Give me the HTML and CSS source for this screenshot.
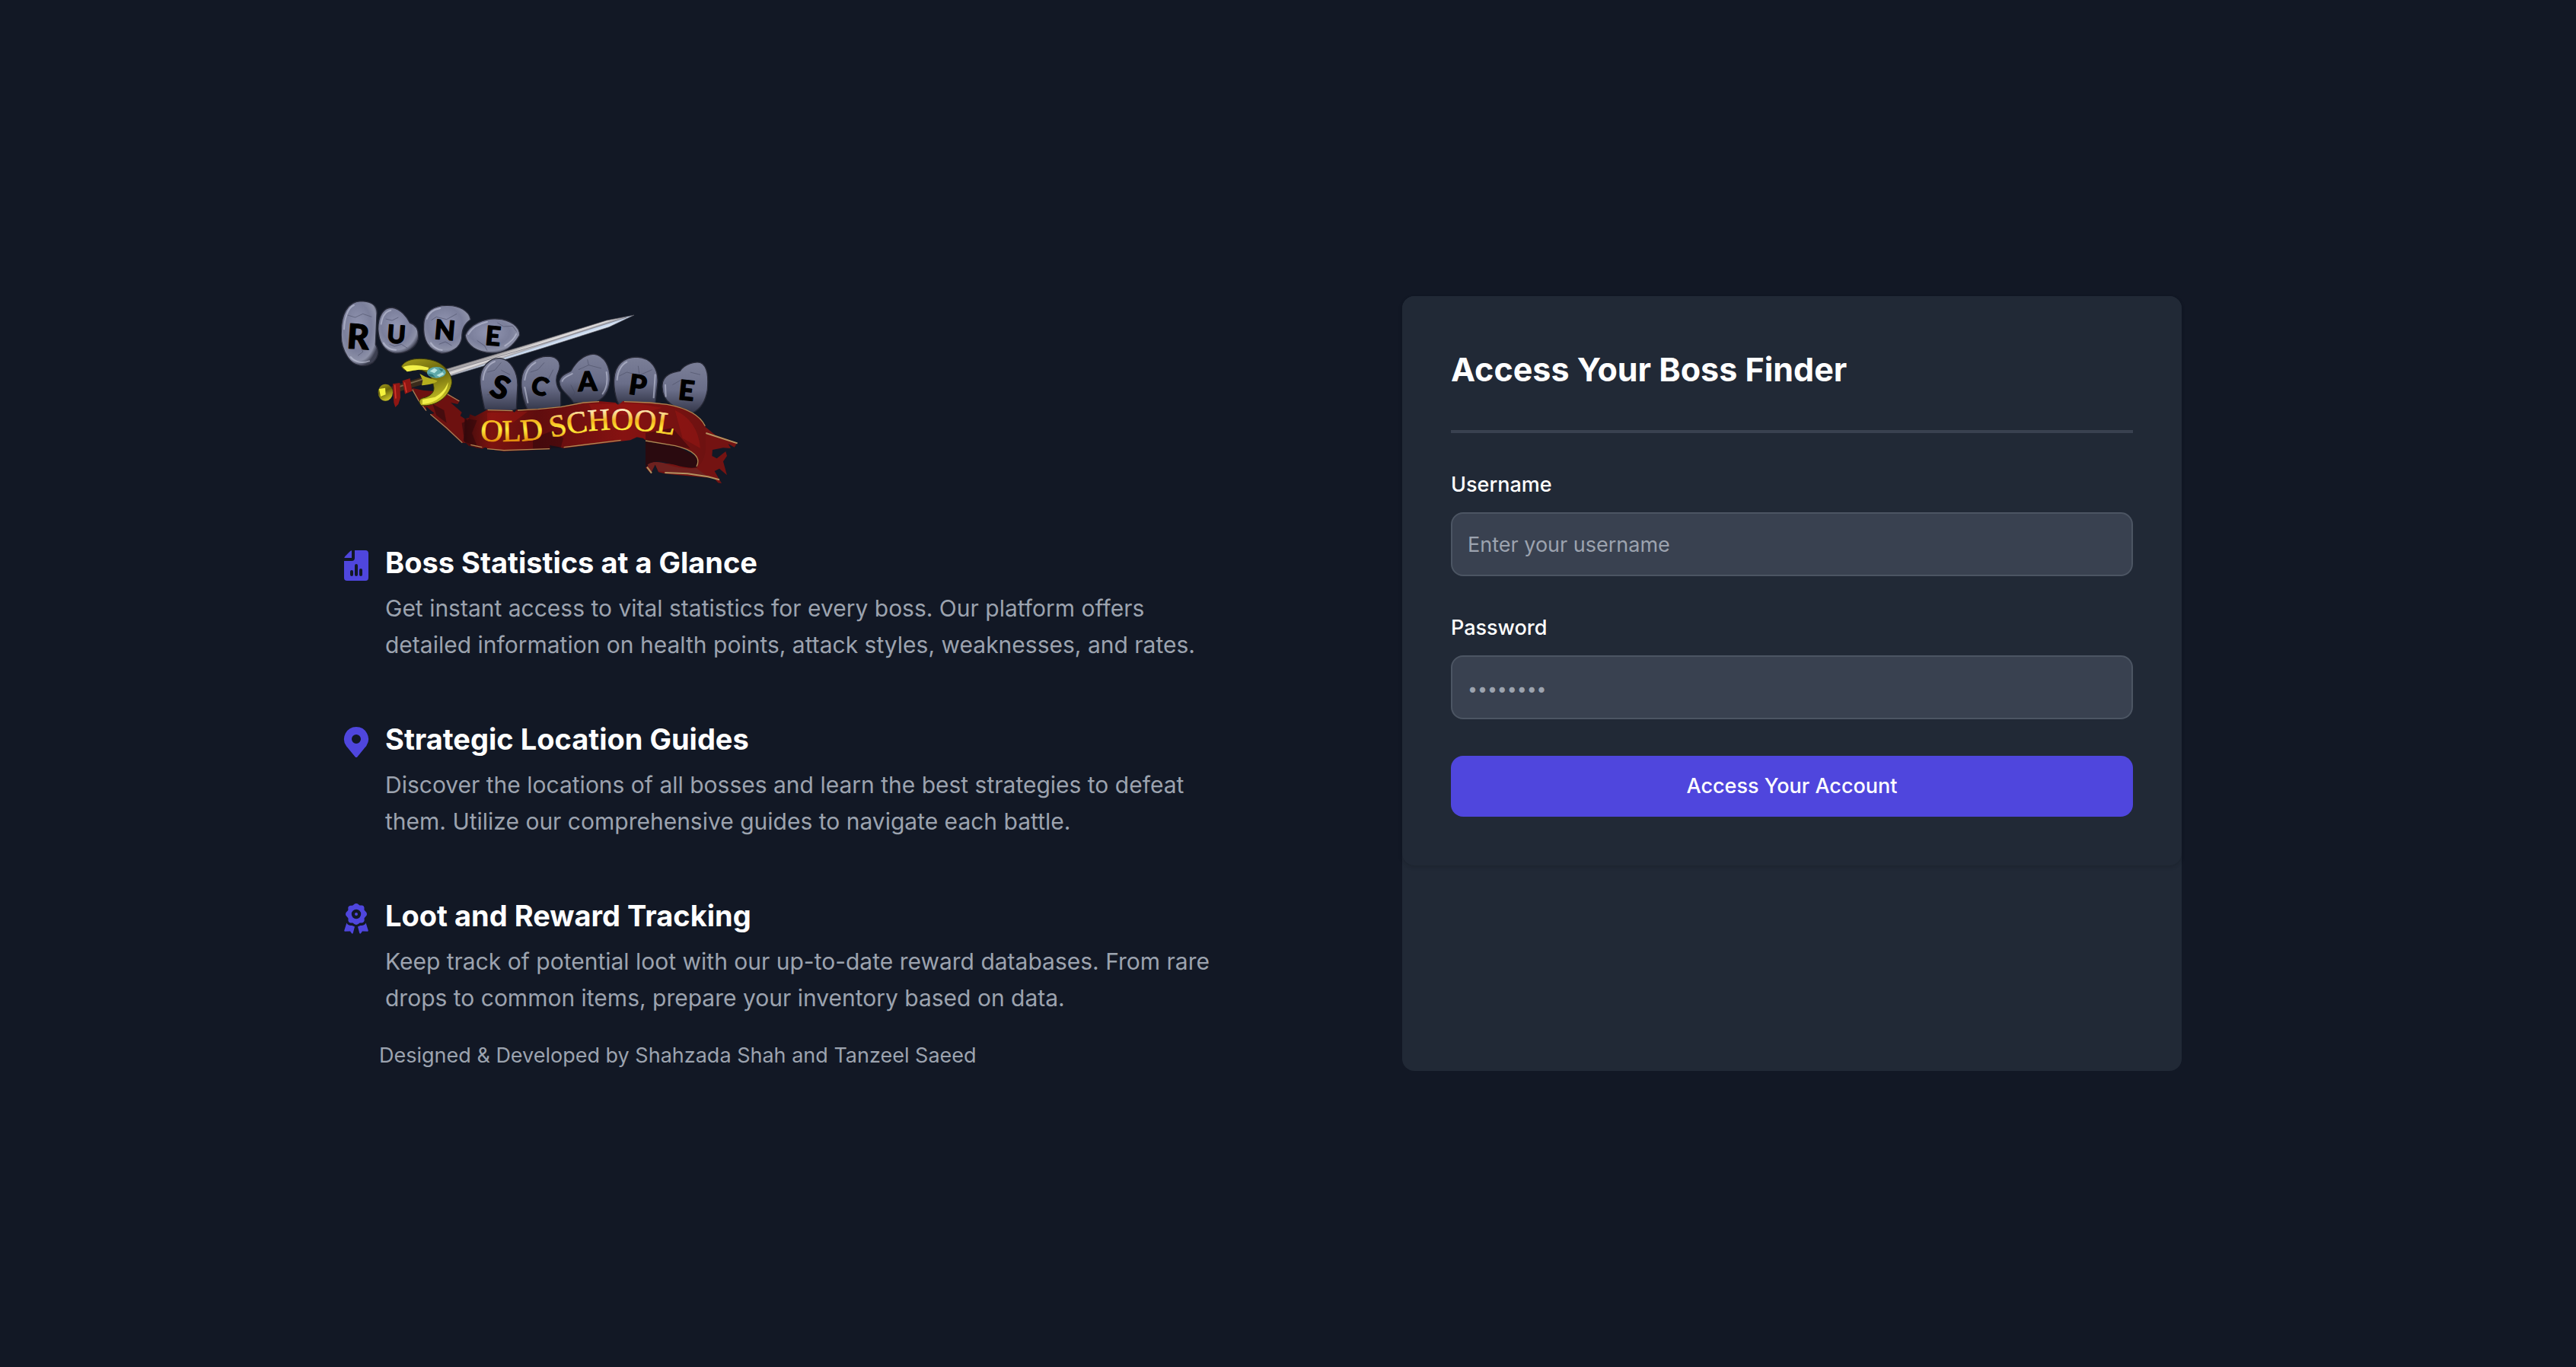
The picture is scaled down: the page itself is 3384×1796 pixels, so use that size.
FILE: index.html
```html
<!DOCTYPE html>
<html lang="en">
<head>
<meta charset="utf-8">
<meta name="viewport" content="width=device-width, initial-scale=1">
<title>Boss Finder</title>
<link rel="stylesheet" href="styles.css">
</head>
<body>
<main class="page">
  <section class="intro">
    <svg class="logo" viewBox="24 0 1572 750" role="img" aria-label="Old School RuneScape">
      <defs>
        <radialGradient id="stone" cx="45%" cy="40%" r="62%">
          <stop offset="0" stop-color="#9296b2"/>
          <stop offset=".6" stop-color="#7b7f9b"/>
          <stop offset=".85" stop-color="#8d91a8"/>
          <stop offset="1" stop-color="#3c3f50"/>
        </radialGradient>
        <linearGradient id="stoneLow" x1="0" y1="0" x2="0" y2="1">
          <stop offset="0" stop-color="#7b7f98"/>
          <stop offset=".55" stop-color="#6a6e89"/>
          <stop offset="1" stop-color="#34374a"/>
        </linearGradient>
        <linearGradient id="blade" gradientUnits="userSpaceOnUse" x1="800" y1="178" x2="812" y2="214">
          <stop offset="0" stop-color="#a9a6a8"/>
          <stop offset=".3" stop-color="#e4e1e1"/>
          <stop offset=".45" stop-color="#a8a6ac"/>
          <stop offset=".6" stop-color="#c4d6ee"/>
          <stop offset="1" stop-color="#eceff5"/>
        </linearGradient>
        <linearGradient id="gold" x1="0" y1="0" x2=".4" y2="1">
          <stop offset="0" stop-color="#a8a01c"/>
          <stop offset=".5" stop-color="#67620b"/>
          <stop offset="1" stop-color="#c2bc24"/>
        </linearGradient>
        <linearGradient id="ribbon" gradientUnits="userSpaceOnUse" x1="500" y1="0" x2="1480" y2="0">
          <stop offset="0" stop-color="#3b0a0c"/>
          <stop offset=".12" stop-color="#7c130f"/>
          <stop offset=".3" stop-color="#5f0d0e"/>
          <stop offset=".65" stop-color="#861211"/>
          <stop offset="1" stop-color="#6c1211"/>
        </linearGradient>
        <linearGradient id="lettering" gradientUnits="userSpaceOnUse" x1="0" y1="440" x2="0" y2="570">
          <stop offset="0" stop-color="#fff6e0"/>
          <stop offset=".4" stop-color="#f4b41c"/>
          <stop offset=".65" stop-color="#ffee3c"/>
          <stop offset="1" stop-color="#e6900c"/>
        </linearGradient>
      </defs>

      <!-- sword blade -->
      <path fill="url(#blade)" stroke="#55535c" stroke-width="2" d="M438 288L810 176L1070 96L1179 75L1080 122L810 208L445 318Z"/>
      <path fill="none" stroke="#8b8992" stroke-width="3" d="M442 298L810 190L1150 84"/>

      <!-- upper stones -->
      <g fill="url(#stone)" stroke="#2a2c3a" stroke-width="4">
        <path d="M25 140C25 80 45 20 105 20C150 22 170 40 165 75L160 190C175 215 172 240 150 262C120 282 75 280 50 240C30 210 22 180 25 140Z"/>
        <path d="M170 130C170 80 190 45 225 45C260 50 285 85 295 105C325 115 332 140 328 170C320 205 280 228 235 225C195 220 172 180 170 130Z"/>
        <path d="M350 110C352 60 390 37 440 37C490 35 530 60 535 92C510 110 500 130 500 165C495 205 455 225 420 226C375 215 345 180 350 110Z"/>
        <path d="M513 155C530 110 590 87 640 90C690 92 730 120 728 155C700 200 670 225 620 225C560 222 520 195 513 155Z"/>
      </g>
      <!-- lower stones -->
      <g fill="url(#stoneLow)" stroke="#262835" stroke-width="4">
        <path d="M572 330C572 280 610 243 650 245C695 250 720 300 720 350L715 445Q650 470 590 445C580 400 572 370 572 330Z"/>
        <path d="M735 330C740 270 790 238 840 237C880 238 895 265 880 300C865 330 875 360 890 380L890 440L760 450C740 410 732 370 735 330Z"/>
        <path d="M884 335C890 310 915 305 930 295C950 260 980 230 1020 228C1065 235 1085 280 1084 330C1080 380 1060 410 1010 425L940 420C920 385 885 375 884 335Z"/>
        <path d="M1100 330C1102 270 1140 240 1190 240C1250 243 1275 290 1272 340L1262 430L1120 430C1105 400 1099 360 1100 330Z"/>
        <path d="M1290 350C1292 310 1330 300 1360 295C1380 265 1420 258 1440 262C1470 275 1472 320 1468 370C1460 420 1440 445 1410 460C1360 445 1285 430 1290 350Z"/>
      </g>
      <!-- highlights and cracks -->
      <g fill="none" stroke="#c3c6da" stroke-width="6" stroke-linecap="round" opacity=".6">
        <path d="M36 130C38 90 50 45 75 36M62 240C80 262 110 266 135 256M182 110C186 80 200 60 220 56M192 185C204 204 222 212 240 212M362 90C370 65 390 52 415 48M378 185C390 203 405 212 422 213M526 150C540 125 570 108 600 102M670 196C695 180 708 165 714 150"/>
        <path d="M584 330C586 295 604 268 630 258M748 330C752 300 766 275 790 262M748 360L760 420M896 335C900 320 920 315 935 306M1070 300C1076 335 1070 365 1055 385M1112 330C1114 295 1130 270 1150 260M1262 310L1256 400M1302 350L1304 395"/>
      </g>
      <g fill="none" stroke="#464960" stroke-width="2" opacity=".8">
        <path d="M50 75L80 84L110 70L145 82M90 235L110 220L104 205L130 195M200 90L225 96L250 84M215 190L235 198L262 190L285 205M380 95L400 82L440 92L480 70M410 190L435 180L460 195M560 175L590 196L600 215M640 105L665 120L700 118L716 140"/>
        <path d="M600 300L630 292L655 262M655 292L690 310M600 390L625 385M770 300L800 290L825 262M860 290L840 330M960 290L1000 272L1050 285M1000 272L995 250M930 350L945 380L935 405M1120 315L1150 300L1200 312L1250 290M1200 312L1195 275M1330 350L1365 330L1420 345M1400 300L1440 310M1360 400L1380 425"/>
      </g>
      <g class="logo-runes" text-anchor="middle">
        <text transform="rotate(4 92 160)" x="92" y="208" font-size="134">R</text>
        <text transform="rotate(4 242 150)" x="242" y="186" font-size="98">U</text>
        <text transform="rotate(5 434 130)" x="434" y="172" font-size="106">N</text>
        <text transform="rotate(5 623 157)" x="623" y="194" font-size="104">E</text>
        <text transform="rotate(22 652 360)" x="652" y="404" font-size="124">S</text>
        <text transform="rotate(16 808 355)" x="808" y="390" font-size="98">C</text>
        <text transform="rotate(-2 995 335)" x="995" y="374" font-size="106">A</text>
        <text transform="rotate(8 1194 350)" x="1194" y="390" font-size="110">P</text>
        <text transform="rotate(6 1386 370)" x="1386" y="410" font-size="108">E</text>
      </g>

      <!-- trailing end of the ribbon behind the hilt -->
      <path fill="#6d1110" d="M303 362L350 372L430 378L492 412L484 426L456 420L500 458L494 472L512 484L548 474L560 600L530 580L500 578L375 466L392 462L360 436L358 452L330 415Z"/>
      <path fill="#2c0a0e" opacity=".6" d="M385 425L430 450L440 500L400 470ZM500 500L550 480L560 596L510 570Z"/>
      <path fill="none" stroke="#a57d55" stroke-width="4" d="M305 368L330 412L360 452M376 466L440 520L502 578M432 380L490 414"/>

      <!-- folded right end -->
      <path fill="#741312" d="M1459 515L1500 548L1586 578L1574 596L1550 582L1560 600L1530 598L1488 606L1486 630L1505 640L1540 612L1545 630L1530 652L1538 680L1545 706L1515 680L1496 690L1524 738L1510 736L1492 716L1459 715L1340 704L1300 700L1275 694L1262 664L1245 700L1224 676L1256 654L1420 672Z"/>
      <path fill="#2a0a0f" d="M1224 570L1341 588L1438 640L1427 675C1380 685 1330 658 1280 652Q1245 650 1224 672Z"/>
      <path fill="#6d211f" d="M1232 664Q1265 644 1310 664C1350 678 1390 682 1424 678L1470 712L1340 696L1275 690L1262 664L1245 696Z"/>
      <path fill="none" stroke="#b3925f" stroke-width="6" d="M1462 540L1586 580M1300 696L1390 700L1470 712L1515 724M1230 674L1248 698"/>

      <!-- main band -->
      <path fill="url(#ribbon)" d="M512 482L524 492L532 466L552 474L602 447L700 450L706 460L716 448L800 444L891 435L980 418L1041 414L1106 420L1116 430L1135 414L1240 418L1309 425C1390 440 1440 470 1459 510L1461 600Q1460 650 1427 675C1450 630 1400 605 1341 590L1224 568L1214 560L1190 556L1164 568L1127 572L902 600L880 594L846 588L849 604L666 612L610 604L592 596L580 602L527 590L506 570Z"/>
      <path fill="#1d060a" opacity=".4" d="M512 482L560 490L540 540L560 590L510 574ZM780 560L860 530L900 560L890 598L780 602ZM1224 540L1330 520L1400 600L1224 570Z"/>
      <path fill="#a71a14" opacity=".4" d="M600 460L760 455L700 500L600 500ZM1000 425L1200 425L1290 440L1180 470L1020 460ZM1340 450Q1430 490 1440 600L1370 560Z"/>
      <path fill="none" stroke="#ad8853" stroke-width="4" d="M602 449L700 452M720 450L800 446L891 437L980 420L1041 416M1140 416L1240 420L1309 427C1390 442 1440 472 1459 512M535 586L580 596M600 602L666 608L846 602M902 596L1127 568M1224 570L1341 590C1410 606 1445 635 1425 672"/>

      <path id="bandLine" fill="none" d="M572 568C680 578 780 570 860 556C1000 528 1140 505 1400 560"/>
      <text class="logo-band"><textPath href="#bandLine">OLD SCHOOL</textPath></text>

      <!-- grip, guard and gem -->
      <path fill="none" stroke="#3a2b1c" stroke-width="28" d="M220 372L350 332"/>
      <path fill="none" stroke="#7a664a" stroke-width="5" d="M250 358L345 328"/>
      <path fill="#8f1613" d="M228 346L256 342L258 400L250 426L238 438L232 420ZM266 334L296 324L304 374L276 386Z"/>
      <path fill="none" stroke="#d0342a" stroke-width="5" d="M236 350L240 404M274 340L282 380"/>
      <path fill="url(#gold)" stroke="#3b3a08" stroke-width="3" d="M262 277C280 245 340 240 390 255C440 270 465 320 460 345C450 400 395 436 340 431C325 415 335 402 355 400C380 392 396 375 388 352C384 325 372 296 330 290C300 294 275 304 262 277Z"/>
      <path fill="#f2f04a" d="M268 280C290 268 330 270 370 282L366 292C330 286 300 296 284 298ZM345 408L395 398C425 380 438 360 446 340C446 380 400 424 345 426Z"/>
      <path fill="#b5ae1e" d="M334 306L356 318L404 334C400 344 368 350 342 352L346 332Z"/>
      <ellipse cx="400" cy="301" rx="37" ry="22" fill="#5fa8a8"/>
      <path fill="#b8e4df" d="M374 296L392 284L404 292L392 304ZM400 312L424 300L430 308L412 318Z"/>
      <path fill="#2f7676" d="M366 306L384 308L396 320L374 316ZM408 284L428 290L420 298Z"/>
      <ellipse cx="199" cy="380" rx="29" ry="33" fill="url(#gold)"/>
      <path fill="#f4f23c" d="M174 366L198 362L200 388L180 396Z"/>
    </svg>

    <ul class="features">
      <li class="feature">
        <svg class="feature-icon" viewBox="0 0 20 20" aria-hidden="true">
          <path d="M7 5V.13a2.96 2.96 0 0 0-1.293.749L2.879 3.707A2.98 2.98 0 0 0 2.13 5H7Z"/>
          <path fill-rule="evenodd" d="M16.066 0H9v5a2 2 0 0 1-2 2H2v11a1.97 1.97 0 0 0 1.934 2h12.132A1.97 1.97 0 0 0 18 18V1.934A1.97 1.97 0 0 0 16.066 0ZM8 16a1 1 0 0 1-2 0v-2a1 1 0 0 1 2 0v2Zm3 0a1 1 0 0 1-2 0v-6a1 1 0 0 1 2 0v6Zm3 0a1 1 0 0 1-2 0v-3a1 1 0 0 1 2 0v3Z"/>
        </svg>
        <div class="feature-body">
          <h3 class="feature-title">Boss Statistics at a Glance</h3>
          <p class="feature-text">Get instant access to vital statistics for every boss. Our platform offers detailed information on health points, attack styles, weaknesses, and rates.</p>
        </div>
      </li>
      <li class="feature">
        <svg class="feature-icon" viewBox="0 0 20 20" aria-hidden="true">
          <path d="M10 0a7.992 7.992 0 0 0-6.583 12.535 1 1 0 0 0 .12.183l.12.146c.112.145.227.285.326.4l5.245 6.374a1 1 0 0 0 1.545-.003l5.092-6.205c.206-.222.4-.455.578-.7l.127-.155a.934.934 0 0 0 .122-.192A8.001 8.001 0 0 0 10 0Zm0 11a3 3 0 1 1 0-6 3 3 0 0 1 0 6Z"/>
        </svg>
        <div class="feature-body">
          <h3 class="feature-title">Strategic Location Guides</h3>
          <p class="feature-text">Discover the locations of all bosses and learn the best strategies to defeat them. Utilize our comprehensive guides to navigate each battle.</p>
        </div>
      </li>
      <li class="feature">
        <svg class="feature-icon" viewBox="0 0 20 20" aria-hidden="true">
          <path fill-rule="evenodd" d="M10 0C11.300 0 11.500.9 12.300 1.200S14.100.9 14.900 1.900S14.900 3.700 15.400 4.500S17 5.700 17 7S15.800 8.700 15.400 9.500S15.800 11.200 14.900 12.100S13.100 12.500 12.300 12.800S11.300 14 10 14S8.500 13.100 7.700 12.800S5.900 13.100 5.100 12.100S5.100 10.300 4.600 9.500S3 8.300 3 7S4.200 5.300 4.600 4.500S4.200 2.800 5.100 1.900S6.900 1.500 7.700 1.200S8.700 0 10 0ZM10 3.900a3.100 3.100 0 1 0 0 6.200a3.100 3.100 0 0 0 0-6.200Z"/>
          <circle cx="10" cy="7" r="1"/>
          <path d="M3.700 12.700C4.300 14.300 6.200 14.400 7.300 14.500L9 15.200L7.900 19.400Q7.500 20.200 6.900 19.500L6 18.200L2.600 18.400Q1.900 18.200 2.200 17.500ZM16.300 12.700C15.700 14.300 13.800 14.400 12.700 14.500L11 15.200L12.100 19.400Q12.500 20.200 13.100 19.500L14 18.200L17.400 18.400Q18.100 18.200 17.800 17.500Z"/>
        </svg>
        <div class="feature-body">
          <h3 class="feature-title">Loot and Reward Tracking</h3>
          <p class="feature-text">Keep track of potential loot with our up-to-date reward databases. From rare drops to common items, prepare your inventory based on data.</p>
        </div>
      </li>
    </ul>
    <p class="credit">Designed &amp; Developed by Shahzada Shah and Tanzeel Saeed</p>
  </section>

  <section class="panel">
    <form class="login">
      <h1 class="login-title">Access Your Boss Finder</h1>
      <hr class="rule">
      <div class="field">
        <label class="field-label" for="username">Username</label>
        <input class="field-input" id="username" name="username" type="text" placeholder="Enter your username">
      </div>
      <div class="field">
        <label class="field-label" for="password">Password</label>
        <input class="field-input field-secret" id="password" name="password" type="password" placeholder="••••••••">
      </div>
      <button class="submit" type="submit">Access Your Account</button>
    </form>
  </section>
</main>
</body>
</html>
```
FILE: styles.css
```css
* {
  box-sizing: border-box;
  margin: 0;
  padding: 0;
}

body {
  min-height: 100vh;
  display: flex;
  align-items: center;
  justify-content: center;
  background: #121825;
  color: #ffffff;
  font-family: Inter, "Liberation Sans", sans-serif;
}

.page {
  width: 100%;
  max-width: 2560px;
  padding: 32px 36px;
  display: grid;
  grid-template-columns: 1fr 1fr;
  gap: 160px;
}

.intro {
  display: flex;
  flex-direction: column;
}

.logo {
  display: block;
  width: 524px;
  max-width: 100%;
  margin-bottom: 80px;
}

.logo-runes {
  fill: #000000;
  stroke: #000000;
  stroke-width: 4px;
  stroke-linejoin: round;
  font-family: Lato, "Open Sans", sans-serif;
  font-weight: 900;
}

.logo-band {
  fill: url(#lettering);
  stroke: url(#lettering);
  stroke-width: 2px;
  font-family: "Liberation Serif", serif;
  font-size: 122px;
}

.features {
  display: flex;
  flex-direction: column;
  gap: 80px;
  list-style: none;
}

.feature {
  display: flex;
  gap: 18px;
}

.feature-icon {
  flex: none;
  width: 40px;
  height: 40px;
  margin-top: 4px;
  fill: #4f46dd;
}

.feature-title {
  margin-bottom: 16px;
  font-size: 38px;
  font-weight: 700;
  line-height: 40px;
}

.feature-text {
  color: #9ca3af;
  font-size: 30px;
  line-height: 48px;
}

.credit {
  margin-top: 32px;
  padding-left: 50px;
  color: #9ca3af;
  font-size: 27px;
  line-height: 40px;
}

.panel {
  width: 100%;
  max-width: 1024px;
  justify-self: center;
  border-radius: 16px;
  background: #212936;
}

.login {
  padding: 64px;
  display: flex;
  flex-direction: column;
  gap: 48px;
  border-radius: 16px;
  background: #212936;
  box-shadow: 0 2px 6px rgba(0, 0, 0, 0.08), 0 2px 4px rgba(0, 0, 0, 0.06);
}

.login-title {
  font-size: 43px;
  font-weight: 700;
  line-height: 64px;
}

.rule {
  height: 4px;
  border: 0;
  background: #394150;
}

.field {
  display: flex;
  flex-direction: column;
  gap: 16px;
}

.field-label {
  font-size: 27px;
  font-weight: 500;
  line-height: 40px;
}

.field-input {
  width: 100%;
  height: 84px;
  padding: 20px;
  border: 2px solid #4c5563;
  border-radius: 16px;
  background: #394150;
  color: #ffffff;
  font: inherit;
  font-size: 27px;
  line-height: 40px;
}

.field-input::placeholder {
  color: #9ca3af;
  opacity: 1;
}

.field-secret::placeholder {
  font-size: 23px;
}

.submit {
  padding: 20px 40px;
  border: 0;
  border-radius: 16px;
  background: #4f46dd;
  color: #ffffff;
  font: inherit;
  font-size: 27px;
  font-weight: 500;
  line-height: 40px;
}
```
